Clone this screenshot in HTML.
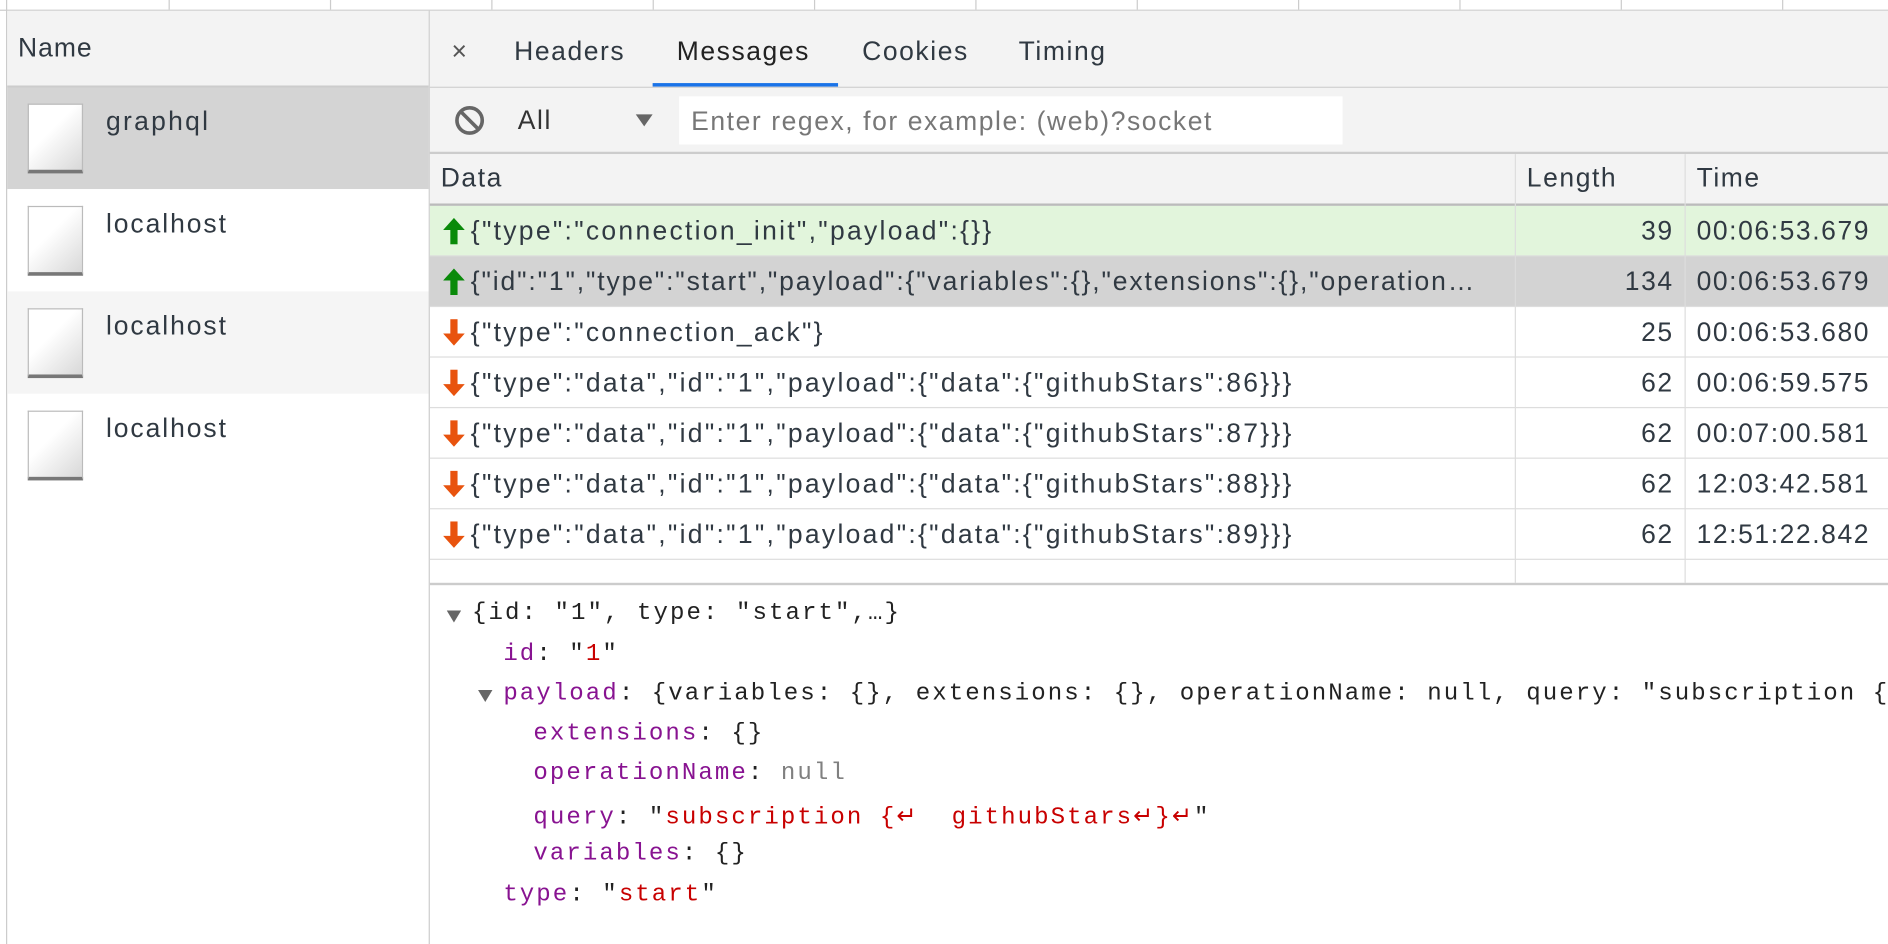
<!DOCTYPE html>
<html><head><meta charset="utf-8"><style>
html,body{margin:0;padding:0;width:1888px;height:944px;overflow:hidden;background:#fff}
#w{position:absolute;left:0;top:0;width:1568px;height:784px;transform:scale(1.2041);transform-origin:0 0;font-family:"Liberation Sans",sans-serif;color:#303942;font-size:22px;letter-spacing:1.3px}
.a{position:absolute;white-space:nowrap}
.vl{position:absolute;width:1px;background:#ccc}
.hl{position:absolute;height:1px;background:#ccc}
.ic{position:absolute;left:23px;width:46px;height:58px;border:1px solid #bbb;border-bottom:3px solid #777;background:linear-gradient(135deg,#fff 40%,#d8d8d8);box-sizing:border-box}
.row{position:absolute;left:357px;width:1211px;height:42px;border-bottom:1px solid #ddd;box-sizing:border-box}
.row span{position:absolute;top:8px;white-space:nowrap}
.d{left:34px;letter-spacing:1.9px}.l{right:178px;text-align:right}.t{left:1052px}
.ar{position:absolute;left:11px;top:10px}
.m{position:absolute;font-family:"Liberation Mono",monospace;font-size:20px;letter-spacing:1.7px;white-space:pre;color:#222}
.p{color:#881391}.r{color:#c80000}.n{color:#808080}
</style></head><body><div id="w">
<div class="hl" style="left:0;top:8px;width:1568px"></div>
<div class="vl" style="left:140px;top:0;height:8px"></div><div class="vl" style="left:274px;top:0;height:8px"></div><div class="vl" style="left:408px;top:0;height:8px"></div><div class="vl" style="left:542px;top:0;height:8px"></div><div class="vl" style="left:676px;top:0;height:8px"></div><div class="vl" style="left:810px;top:0;height:8px"></div><div class="vl" style="left:944px;top:0;height:8px"></div><div class="vl" style="left:1078px;top:0;height:8px"></div><div class="vl" style="left:1212px;top:0;height:8px"></div><div class="vl" style="left:1346px;top:0;height:8px"></div><div class="vl" style="left:1480px;top:0;height:8px"></div>
<div class="vl" style="left:5px;top:0;height:784px"></div>
<div class="a" style="left:6px;top:9px;width:350px;height:62px;background:#f3f3f3"></div>
<div class="a" style="left:15px;top:27px;letter-spacing:0.8px">Name</div>
<div class="hl" style="left:6px;top:71px;width:350px;height:2px"></div>
<div class="a" style="left:6px;top:73px;width:350px;height:84px;background:#d4d4d4"></div>
<div class="a" style="left:6px;top:242px;width:350px;height:85px;background:#f5f5f5"></div>
<div class="ic" style="top:86px"></div><div class="a" style="left:88px;top:88px;letter-spacing:1.9px">graphql</div>
<div class="ic" style="top:171px"></div><div class="a" style="left:88px;top:173px;letter-spacing:1.6px">localhost</div>
<div class="ic" style="top:256px"></div><div class="a" style="left:88px;top:258px;letter-spacing:1.6px">localhost</div>
<div class="ic" style="top:341px"></div><div class="a" style="left:88px;top:343px;letter-spacing:1.6px">localhost</div>
<div class="vl" style="left:356px;top:9px;height:775px"></div>
<div class="a" style="left:357px;top:9px;width:1211px;height:63px;background:#f3f3f3"></div>
<div class="a" style="left:375px;top:30px;font-size:22px;color:#555">×</div>
<div class="a" style="left:427px;top:30px">Headers</div>
<div class="a" style="left:562px;top:30px;color:#222">Messages</div>
<div class="a" style="left:716px;top:30px">Cookies</div>
<div class="a" style="left:846px;top:30px">Timing</div>
<div class="a" style="left:542px;top:69px;width:154px;height:3px;background:#1a73e8"></div>
<div class="hl" style="left:357px;top:72px;width:1211px"></div>
<div class="a" style="left:357px;top:73px;width:1211px;height:53px;background:#f3f3f3"></div>
<svg class="a" style="left:377px;top:87px" width="26" height="26" viewBox="0 0 26 26"><circle cx="13" cy="13" r="10.5" fill="none" stroke="#666" stroke-width="3"/><line x1="6" y1="6" x2="20" y2="20" stroke="#666" stroke-width="3"/></svg>
<div class="a" style="left:430px;top:87px;color:#333">All</div>
<svg class="a" style="left:527px;top:94px" width="16" height="12"><polygon points="1,1 15,1 8,11" fill="#666"/></svg>
<div class="a" style="left:564px;top:80px;width:551px;height:40px;background:#fff"></div>
<div class="a" style="left:574px;top:88px;color:#777">Enter regex, for example: (web)?socket</div>
<div class="hl" style="left:357px;top:126px;width:1211px;height:2px"></div>
<div class="a" style="left:357px;top:128px;width:1211px;height:41px;background:#f3f3f3"></div>
<div class="a" style="left:366px;top:135px">Data</div>
<div class="a" style="left:1268px;top:135px">Length</div>
<div class="a" style="left:1409px;top:135px">Time</div>
<div class="hl" style="left:357px;top:169px;width:1211px;height:2px;background:#bbb"></div>
<div class="row" style="top:171px;background:#e2f5dc"><svg class="ar" width="18" height="22"><polygon points="9,0 18,10 12,10 12,22 6,22 6,10 0,10" fill="#0a8a0a"/></svg><span class="d">{"type":"connection_init","payload":{}}</span><span class="l">39</span><span class="t">00:06:53.679</span></div>
<div class="row" style="top:213px;background:#d3d3d3"><svg class="ar" width="18" height="22"><polygon points="9,0 18,10 12,10 12,22 6,22 6,10 0,10" fill="#0a8a0a"/></svg><span class="d" style="letter-spacing:1.55px">{"id":"1","type":"start","payload":{"variables":{},"extensions":{},"operation…</span><span class="l">134</span><span class="t">00:06:53.679</span></div>
<div class="row" style="top:255px"><svg class="ar" width="18" height="22"><polygon points="9,22 18,12 12,12 12,0 6,0 6,12 0,12" fill="#e8530e"/></svg><span class="d">{"type":"connection_ack"}</span><span class="l">25</span><span class="t">00:06:53.680</span></div>
<div class="row" style="top:297px"><svg class="ar" width="18" height="22"><polygon points="9,22 18,12 12,12 12,0 6,0 6,12 0,12" fill="#e8530e"/></svg><span class="d">{"type":"data","id":"1","payload":{"data":{"githubStars":86}}}</span><span class="l">62</span><span class="t">00:06:59.575</span></div>
<div class="row" style="top:339px"><svg class="ar" width="18" height="22"><polygon points="9,22 18,12 12,12 12,0 6,0 6,12 0,12" fill="#e8530e"/></svg><span class="d">{"type":"data","id":"1","payload":{"data":{"githubStars":87}}}</span><span class="l">62</span><span class="t">00:07:00.581</span></div>
<div class="row" style="top:381px"><svg class="ar" width="18" height="22"><polygon points="9,22 18,12 12,12 12,0 6,0 6,12 0,12" fill="#e8530e"/></svg><span class="d">{"type":"data","id":"1","payload":{"data":{"githubStars":88}}}</span><span class="l">62</span><span class="t">12:03:42.581</span></div>
<div class="row" style="top:423px"><svg class="ar" width="18" height="22"><polygon points="9,22 18,12 12,12 12,0 6,0 6,12 0,12" fill="#e8530e"/></svg><span class="d">{"type":"data","id":"1","payload":{"data":{"githubStars":89}}}</span><span class="l">62</span><span class="t">12:51:22.842</span></div>
<div class="vl" style="left:1258px;top:128px;height:356px;background:#ddd"></div>
<div class="vl" style="left:1399px;top:128px;height:356px;background:#ddd"></div>
<div class="hl" style="left:357px;top:484px;width:1211px;height:2px"></div>
<svg class="a" style="left:371px;top:507px" width="12" height="10"><polygon points="0,0 12,0 6,10" fill="#666"/></svg>
<div class="m" style="left:392px;top:498px">{id: "1", type: "start",…}</div>
<div class="m" style="left:418px;top:532px"><span class="p">id</span>: "<span class="r">1</span>"</div>
<svg class="a" style="left:397px;top:573px" width="12" height="10"><polygon points="0,0 12,0 6,10" fill="#666"/></svg>
<div class="m" style="left:418px;top:565px"><span class="p">payload</span>: {variables: {}, extensions: {}, operationName: null, query: "subscription {</div>
<div class="m" style="left:443px;top:598px"><span class="p">extensions</span>: {}</div>
<div class="m" style="left:443px;top:631px"><span class="p">operationName</span>: <span class="n">null</span></div>
<div class="m" style="left:443px;top:665px"><span class="p">query</span>: "<span class="r">subscription {↵  githubStars↵}↵</span>"</div>
<div class="m" style="left:443px;top:698px"><span class="p">variables</span>: {}</div>
<div class="m" style="left:418px;top:732px"><span class="p">type</span>: "<span class="r">start</span>"</div>
</div></body></html>
